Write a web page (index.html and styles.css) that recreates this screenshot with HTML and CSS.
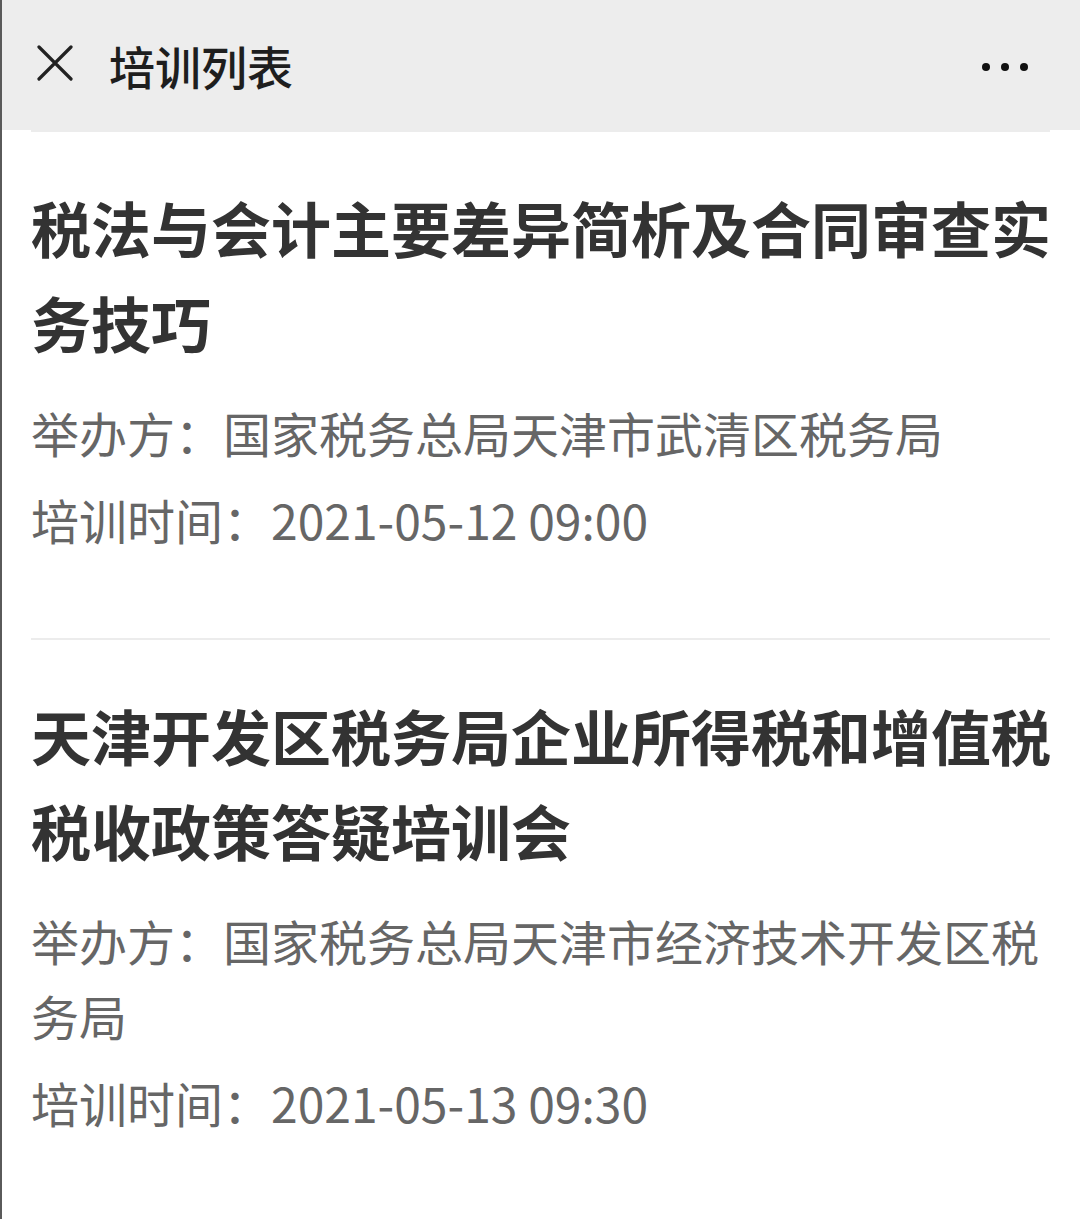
FILE: index.html
```html
<!DOCTYPE html>
<html lang="zh-CN">
<head>
  <meta charset="UTF-8">
  <meta name="viewport" content="width=device-width, initial-scale=1.0">
  <title>培训列表</title>
  <link rel="stylesheet" href="styles.css">
</head>
<body>
  <div class="page">
    <header class="topbar">
      <svg class="close" width="36" height="36" viewBox="0 0 36 36">
        <path d="M2 2 L34 34 M34 2 L2 34" stroke="#222" stroke-width="3.2" stroke-linecap="round" fill="none"/>
      </svg>
      <h1 class="bar-title">培训列表</h1>
      <div class="more">
        <span></span><span></span><span></span>
      </div>
    </header>

    <!-- 培训列表 -->
    <ul class="list">
      <li class="item">
        <h2 class="title">税法与会计主要差异简析及合同审查实务技巧</h2>
        <p class="meta">举办方：国家税务总局天津市武清区税务局</p>
        <p class="meta">培训时间：2021-05-12 09:00</p>
      </li>
      <li class="item">
        <h2 class="title">天津开发区税务局企业所得税和增值税税收政策答疑培训会</h2>
        <p class="meta">举办方：国家税务总局天津市经济技术开发区税务局</p>
        <p class="meta">培训时间：2021-05-13 09:30</p>
      </li>
    </ul>
  </div>
</body>
</html>
```

FILE: styles.css
```css
body{
  margin: 0;
  background-color: white;
  font-family: "Noto Sans CJK SC", "Noto Sans", sans-serif;
}
.page{
  min-height: 100vh;
  border-left: 2px solid #5a5a5a;
}
/* 상단 바 */
.topbar{
  height: 130px;
  background-color: #ededed;
  display: flex;
  align-items: center;
  padding: 0 52px 0 35px;
}
.close{
  flex: none;
  margin-top: -4px;
}
.bar-title{
  margin: 0 0 0 36px;
  font-size: 46px;
  font-weight: 500;
  color: #1e1e1e;
  flex: 1;
  line-height: 1;
}
.more{
  display: flex;
  gap: 11px;
  margin-top: 4px;
}
.more span{
  width: 8px;
  height: 8px;
  border-radius: 50%;
  background-color: #111;
}
/* 목록 */
.list{
  list-style: none;
  margin: 0 30px 0 29px;
  padding: 0;
}
.item{
  border-top: 2px solid #ececec;
  padding: 47px 0 81px;
}
.title{
  margin: 0 -6px 26px 0;
  font-size: 60px;
  line-height: 95px;
  font-weight: 700;
  color: #333;
}
.meta{
  margin: 0 0 12px;
  font-size: 48px;
  line-height: 75px;
  color: #666;
}
.meta:last-child{
  margin-bottom: 0;
}
```
